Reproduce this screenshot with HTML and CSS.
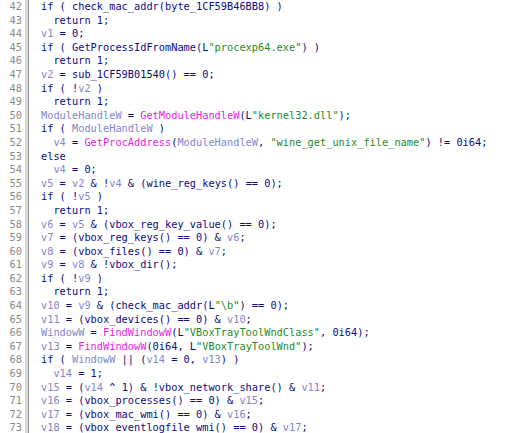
FILE: index.html
```html
<!DOCTYPE html>
<html>
<head>
<meta charset="utf-8">
<link rel="stylesheet" href="styles.css">
</head>
<body>
<div class="view">
<div class="gutter">
<div>42</div><div>43</div><div>44</div><div>45</div><div>46</div><div>47</div><div>48</div><div>49</div><div>50</div><div>51</div><div>52</div><div>53</div><div>54</div><div>55</div><div>56</div><div>57</div><div>58</div><div>59</div><div>60</div><div>61</div><div>62</div><div>63</div><div>64</div><div>65</div><div>66</div><div>67</div><div>68</div><div>69</div><div>70</div><div>71</div><div>72</div><div>73</div>
</div>
<div class="bar"></div>
<div class="code">
<div>if ( check_mac_addr(byte_1CF59B46BB8) )</div>
<div>  return 1;</div>
<div><span class="v">v1</span> = 0;</div>
<div>if ( GetProcessIdFromName(L<span class="s">"procexp64.exe"</span>) )</div>
<div>  return 1;</div>
<div><span class="v">v2</span> = sub_1CF59B01540() == 0;</div>
<div>if ( !<span class="v">v2</span> )</div>
<div>  return 1;</div>
<div><span class="v">ModuleHandleW</span> = <span class="f">GetModuleHandleW</span>(L<span class="s">"kernel32.dll"</span>);</div>
<div>if ( <span class="v">ModuleHandleW</span> )</div>
<div>  <span class="v">v4</span> = <span class="f">GetProcAddress</span>(<span class="v">ModuleHandleW</span>, <span class="s">"wine_get_unix_file_name"</span>) != 0i64;</div>
<div>else</div>
<div>  <span class="v">v4</span> = 0;</div>
<div><span class="v">v5</span> = <span class="v">v2</span> &amp; !<span class="v">v4</span> &amp; (wine_reg_keys() == 0);</div>
<div>if ( !<span class="v">v5</span> )</div>
<div>  return 1;</div>
<div><span class="v">v6</span> = <span class="v">v5</span> &amp; (vbox_reg_key_value() == 0);</div>
<div><span class="v">v7</span> = (vbox_reg_keys() == 0) &amp; <span class="v">v6</span>;</div>
<div><span class="v">v8</span> = (vbox_files() == 0) &amp; <span class="v">v7</span>;</div>
<div><span class="v">v9</span> = <span class="v">v8</span> &amp; !vbox_dir();</div>
<div>if ( !<span class="v">v9</span> )</div>
<div>  return 1;</div>
<div><span class="v">v10</span> = <span class="v">v9</span> &amp; (check_mac_addr(L<span class="s">"\b"</span>) == 0);</div>
<div><span class="v">v11</span> = (vbox_devices() == 0) &amp; <span class="v">v10</span>;</div>
<div><span class="v">WindowW</span> = <span class="f">FindWindowW</span>(L<span class="s">"VBoxTrayToolWndClass"</span>, 0i64);</div>
<div><span class="v">v13</span> = <span class="f">FindWindowW</span>(0i64, L<span class="s">"VBoxTrayToolWnd"</span>);</div>
<div>if ( <span class="v">WindowW</span> || (<span class="v">v14</span> = 0, <span class="v">v13</span>) )</div>
<div>  <span class="v">v14</span> = 1;</div>
<div><span class="v">v15</span> = (<span class="v">v14</span> ^ 1) &amp; !vbox_network_share() &amp; <span class="v">v11</span>;</div>
<div><span class="v">v16</span> = (vbox_processes() == 0) &amp; <span class="v">v15</span>;</div>
<div><span class="v">v17</span> = (vbox_mac_wmi() == 0) &amp; <span class="v">v16</span>;</div>
<div><span class="v">v18</span> = (vbox_eventlogfile_wmi() == 0) &amp; <span class="v">v17</span>;</div>
</div>
</div>
</body>
</html>
```
FILE: styles.css
```css
html, body {
  margin: 0;
  padding: 0;
  background: #ffffff;
}
.view {
  display: flex;
  font-family: "DejaVu Sans Mono", "Liberation Mono", monospace;
  font-size: 10.3px;
  line-height: 13.6px;
}
.gutter > div,
.code > div {
  white-space: pre;
  height: 13.6px;
}
.gutter {
  width: 22px;
  text-align: right;
  color: #8a8a8a;
  padding-right: 3px;
}
.bar {
  width: 3px;
  background: #d8d8d8;
  border-right: 1px solid #9a9a9a;
  margin-right: 12px;
}
.code {
  color: #0c0c80;
}
.v {
  color: #8585cc;
}
.f {
  color: #e622e6;
}
.s {
  color: #1f8a1f;
}
```
